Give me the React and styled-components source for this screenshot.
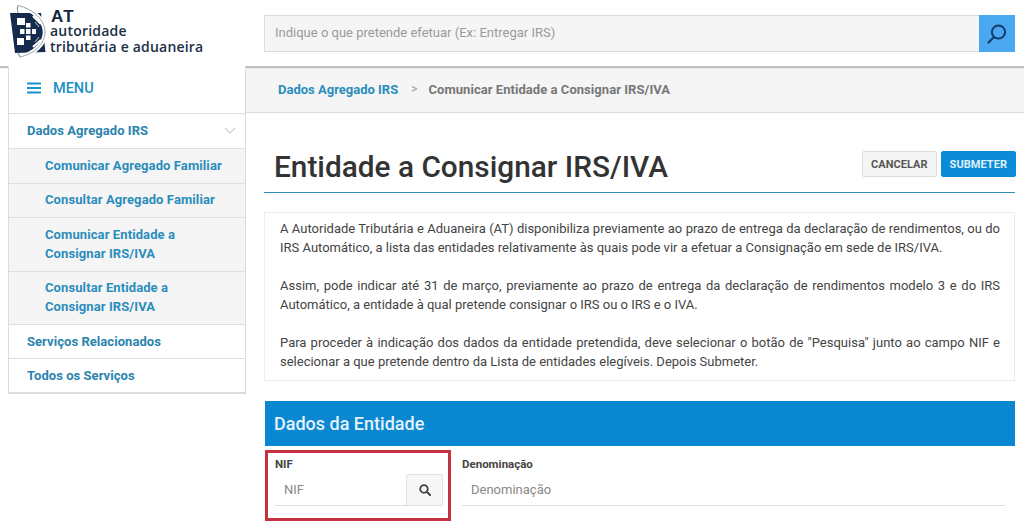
import React from "react";
import styled, { createGlobalStyle } from "styled-components";

const Global = createGlobalStyle`
  html, body { margin: 0; padding: 0; background: #fff; height: 529px; overflow: hidden; }
  body { font-family: Roboto, "Liberation Sans", sans-serif; }
  * { box-sizing: border-box; }
`;

const Page = styled.div`
  width: 1024px;
  height: 529px;
  overflow: hidden;
  display: flex;
  flex-direction: column;
`;
const Header = styled.header`
  height: 66px;
  flex: none;
  display: flex;
  align-items: flex-start;
  background: #fff;
  position: relative;
  z-index: 1;
  box-shadow: 0 2px 1px #bfc1c1;
`;
const Brand = styled.div`
  width: 264px;
  flex: none;
  padding: 5px 0 0 10px;
  display: flex;
  gap: 3px;
`;
const BrandText = styled.div`
  display: flex;
  flex-direction: column;
  color: #1b2f45;
  font-family: "Open Sans", sans-serif;
  font-weight: 600;
  font-size: 14px;
  line-height: 16px;
  padding-top: 6px;
  letter-spacing: 0.2px;
  white-space: nowrap;
`;
const BrandAT = styled.span`
  font-family: "Liberation Sans", sans-serif;
  font-weight: 700;
  font-size: 17px;
  line-height: 12px;
  letter-spacing: 1.2px;
  color: #14263b;
  margin-left: 1px;
`;
const Search = styled.div`
  margin-top: 15px;
  width: 751px;
  height: 37px;
  display: flex;
  background: #f5f5f5;
  border: 1px solid #dcdcdc;
  border-right: none;
`;
const SearchText = styled.div`
  flex: 1;
  padding-left: 10px;
  line-height: 34px;
  font-size: 13px;
  color: #9a9a9a;
`;
const SearchBtn = styled.div`
  width: 36px;
  margin: -1px 0;
  background: #4aa8f0;
  display: flex;
  align-items: center;
  justify-content: center;
`;
const Body = styled.div`
  flex: 1;
  display: flex;
  min-height: 0;
`;
const Side = styled.nav`
  width: 238px;
  margin-left: 8px;
  flex: none;
  align-self: flex-start;
  background: #fff;
  border: 1px solid #dcdcdc;
  border-top: none;
  border-bottom: 2px solid #dcdcdc;
  position: relative;
  z-index: 2;
`;
const MenuHead = styled.div`
  height: 48px;
  display: flex;
  align-items: center;
  padding: 0 0 3px 18px;
  gap: 12px;
  color: #1c8fc4;
  font-size: 14.5px;
  font-weight: 500;
  border-bottom: 1px solid #dedede;
`;
const Top = styled.div`
  min-height: 34px;
  display: flex;
  align-items: center;
  justify-content: space-between;
  padding: 0 9px ${(p) => (p.$line ? "0" : "2px")} 18px;
  font-size: 13px;
  font-weight: 700;
  letter-spacing: 0.05px;
  color: #2a84ad;
  border-top: ${(p) => (p.$line ? "1px solid #dedede" : "none")};
`;
const Sub = styled.div`
  padding: 6.5px 18px 8px 36px;
  background: #f5f5f5;
  border-top: 1px solid #dedede;
  font-size: 13px;
  font-weight: 700;
  line-height: 19px;
  letter-spacing: 0.1px;
  color: #2a8dbb;
`;
const Main = styled.main`
  flex: 1;
  min-width: 0;
`;
const Crumbs = styled.div`
  height: 47px;
  padding-left: 32px;
  display: flex;
  align-items: center;
  background: #f5f5f5;
  border-bottom: 1px solid #dcdcdc;
  font-size: 13px;
  font-weight: 700;
`;
const CrumbLink = styled.span`
  color: #2a8dbb;
`;
const CrumbSep = styled.span`
  color: #999;
  margin: 0 11px 0 13px;
  font-weight: 400;
  font-size: 12px;
`;
const CrumbNow = styled.span`
  color: #777;
  letter-spacing: 0.05px;
`;
const Content = styled.div`
  padding: 0 9px 0 18px;
`;
const TitleRow = styled.div`
  height: 80px;
  display: flex;
  align-items: flex-end;
  justify-content: space-between;
  border-bottom: 1px solid #2a8dbb;
  padding: 0 0 9px 10px;
`;
const Title = styled.h1`
  margin: 0;
  font-size: 29.8px;
  font-weight: 500;
  line-height: 33px;
  color: #333;
`;
const Actions = styled.div`
  display: flex;
  gap: 4px;
  margin-bottom: 6px;
  margin-right: -1px;
`;
const Btn = styled.div`
  height: 26px;
  padding: 0 8px;
  display: flex;
  align-items: center;
  font-size: 11px;
  font-weight: 700;
  letter-spacing: 0.05px;
  border-radius: 2px;
  color: ${(p) => (p.$primary ? "#dff1fb" : "#555")};
  background: ${(p) => (p.$primary ? "#0b8bd8" : "#f5f5f5")};
  border: 1px solid ${(p) => (p.$primary ? "#0b8bd8" : "#dcdcdc")};
`;
const Card = styled.section`
  margin-top: 19px;
  height: 169px;
  padding: 6px 14px 0 15px;
  border: 1px solid #ececec;
  font-size: 13px;
  line-height: 19px;
  color: #444;
`;
const Para = styled.p`
  margin: 0 0 19px;
  text-align: justify;
`;
const Panel = styled.div`
  margin-top: 20px;
  margin-left: 1px;
  height: 45px;
  background: #0a87d1;
  color: #e4f2fb;
  font-size: 18px;
  font-weight: 500;
  line-height: 45px;
  padding-left: 9px;
`;
const Fields = styled.div`
  display: flex;
  margin: 4px 10px 0 1px;
  gap: 11px;
`;
const NifBox = styled.div`
  width: 186px;
  height: 71px;
  flex: none;
  border: 3px solid #c4323f;
  padding: 4px 5px 0 7px;
`;
const Label = styled.div`
  font-size: 11.5px;
  font-weight: 700;
  line-height: 14px;
  color: #444;
`;
const InputRow = styled.div`
  height: 32px;
  display: flex;
  align-items: stretch;
  justify-content: space-between;
  border-bottom: 1px solid #dedede;
  margin-top: 3px;
`;
const InputText = styled.span`
  padding-left: 9px;
  font-size: 13px;
  line-height: 31px;
  color: #888;
`;
const IconBtn = styled.div`
  width: 37px;
  height: 32px;
  background: #f7f7f7;
  border: 1px solid #e2e2e2;
  border-radius: 2px;
  display: flex;
  align-items: center;
  justify-content: center;
`;
const Den = styled.div`
  flex: 1;
  padding-top: 7px;
`;

const Logo = () => (
  <svg width="37" height="53" viewBox="10 5 37 53" style={{ flex: "none" }}>
    <path d="M10 13 L41 13 L45.5 52 L15 53 Z" fill="#142b4d" />
    <path d="M18 5.5 C33 9 45 20 45 32 C45 44 34 54 20 57" fill="none" stroke="#fff" strokeWidth="4.5" />
    <path d="M18 5.5 C33 9 45 20 45 32 C45 44 34 54 20 57" fill="none" stroke="#8f98a3" strokeWidth="0.9" />
    <path d="M18 5.5 C16 9 18 12 18 13 M18 53 L20 57" fill="none" stroke="#8f98a3" strokeWidth="1.2" />
    <g fill="#fff">
      <rect x="17" y="18" width="8" height="7" />
      <rect x="17" y="38" width="7" height="7" />
      <rect x="20" y="29" width="4.5" height="5" />
      <rect x="26" y="29" width="4.5" height="5" />
      <rect x="32" y="29" width="4" height="5" />
      <rect x="26" y="23" width="4.5" height="4.5" />
      <rect x="26" y="35.5" width="4.5" height="4.5" />
    </g>
    <path d="M33 16 L41 24 M33 47 L41 40" stroke="#fff" strokeWidth="2.2" />
    <path d="M35 22 L39 27 M35 42 L39 37" stroke="#c5cad0" strokeWidth="1" />
  </svg>
);
const Burger = () => (
  <svg width="14" height="12" viewBox="0 0 14 12">
    <path d="M0 1.5H14M0 6H14M0 10.5H14" stroke="#1c8fc4" strokeWidth="2" />
  </svg>
);
const Chevron = () => (
  <svg width="12" height="7" viewBox="0 0 12 7">
    <path d="M1 1L6 6L11 1" fill="none" stroke="#d2d6d8" strokeWidth="1.4" />
  </svg>
);
const BigSearch = () => (
  <svg width="22" height="22" viewBox="0 0 22 22">
    <circle cx="12.5" cy="9" r="6.6" fill="none" stroke="#123c6b" strokeWidth="2" />
    <path d="M8 14L2.5 19.5" stroke="#123c6b" strokeWidth="2.2" strokeLinecap="round" />
  </svg>
);
const SmallSearch = () => (
  <svg width="12" height="12" viewBox="0 0 12 12">
    <circle cx="5" cy="5" r="3.8" fill="none" stroke="#444" strokeWidth="1.8" />
    <path d="M7.8 7.8L11 11" stroke="#444" strokeWidth="2" strokeLinecap="round" />
  </svg>
);

export default function App() {
  return (
    <Page>
      <Global />
      <Header>
        <Brand>
          <Logo />
          <BrandText>
            <BrandAT>AT</BrandAT>
            <span>autoridade</span>
            <span>tributária e aduaneira</span>
          </BrandText>
        </Brand>
        <Search>
          <SearchText>Indique o que pretende efetuar (Ex: Entregar IRS)</SearchText>
          <SearchBtn>
            <BigSearch />
          </SearchBtn>
        </Search>
      </Header>
      <Body>
        <Side>
          <MenuHead>
            <Burger />
            MENU
          </MenuHead>
          <Top>
            Dados Agregado IRS
            <Chevron />
          </Top>
          <Sub>Comunicar Agregado Familiar</Sub>
          <Sub>Consultar Agregado Familiar</Sub>
          <Sub>
            Comunicar Entidade a<br />
            Consignar IRS/IVA
          </Sub>
          <Sub>
            Consultar Entidade a<br />
            Consignar IRS/IVA
          </Sub>
          <Top $line>Serviços Relacionados</Top>
          <Top $line>Todos os Serviços</Top>
        </Side>
        <Main>
          <Crumbs>
            <CrumbLink>Dados Agregado IRS</CrumbLink>
            <CrumbSep>&gt;</CrumbSep>
            <CrumbNow>Comunicar Entidade a Consignar IRS/IVA</CrumbNow>
          </Crumbs>
          <Content>
            <TitleRow>
              <Title>Entidade a Consignar IRS/IVA</Title>
              <Actions>
                <Btn>CANCELAR</Btn>
                <Btn $primary>SUBMETER</Btn>
              </Actions>
            </TitleRow>
            <Card>
              <Para>
                A Autoridade Tributária e Aduaneira (AT) disponibiliza previamente ao prazo de entrega da
                declaração de rendimentos, ou do IRS Automático, a lista das entidades relativamente às quais
                pode vir a efetuar a Consignação em sede de IRS/IVA.
              </Para>
              <Para>
                Assim, pode indicar até 31 de março, previamente ao prazo de entrega da declaração de
                rendimentos modelo 3 e do IRS Automático, a entidade à qual pretende consignar o IRS ou o IRS
                e o IVA.
              </Para>
              <Para>
                Para proceder à indicação dos dados da entidade pretendida, deve selecionar o botão de
                "Pesquisa" junto ao campo NIF e selecionar a que pretende dentro da Lista de entidades
                elegíveis. Depois Submeter.
              </Para>
            </Card>
            <Panel>Dados da Entidade</Panel>
            <Fields>
              <NifBox>
                <Label>NIF</Label>
                <InputRow>
                  <InputText>NIF</InputText>
                  <IconBtn>
                    <SmallSearch />
                  </IconBtn>
                </InputRow>
              </NifBox>
              <Den>
                <Label>Denominação</Label>
                <InputRow>
                  <InputText>Denominação</InputText>
                </InputRow>
              </Den>
            </Fields>
          </Content>
        </Main>
      </Body>
    </Page>
  );
}
